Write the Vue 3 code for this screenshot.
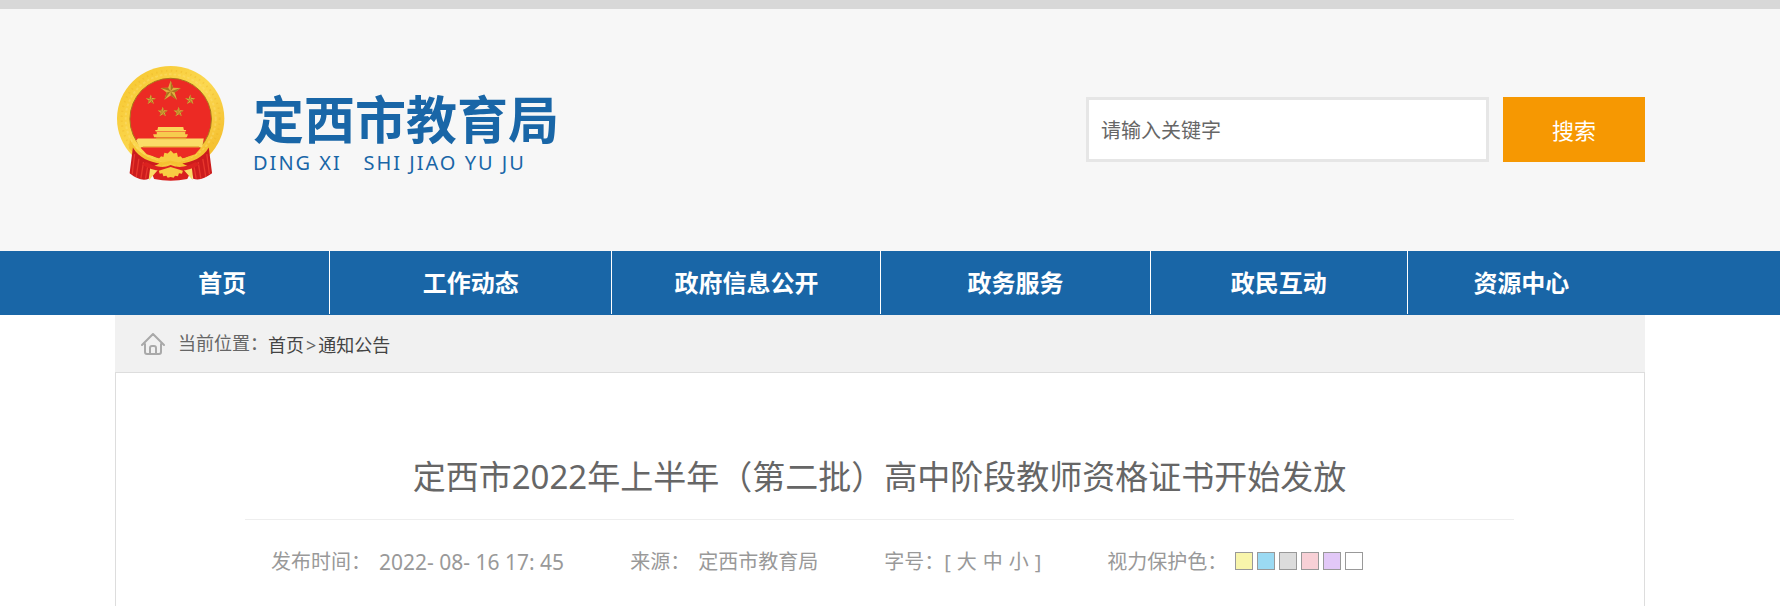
<script setup>
import { ref } from 'vue';

const keyword = ref('');

const menu = [
  { nome: '首页', size: 215 },
  { nome: '工作动态', size: 282 },
  { nome: '政府信息公开', size: 269 },
  { nome: '政务服务', size: 269 },
  { nome: '政民互动', size: 257 },
  { nome: '资源中心', size: 228 },
];

const sizes = ['大', '中', '小'];

const colors = [
  { name: '黄色', value: '#f8f5ab' },
  { name: '蓝色', value: '#9bdaf3' },
  { name: '灰色', value: '#dcdcdc' },
  { name: '粉色', value: '#f8d0d6' },
  { name: '紫色', value: '#e2c8f7' },
  { name: '白色', value: '#ffffff' },
];
const background = ref('#ffffff');

const stars = [
  { x: 212, y: 124, s: 32 },
  { x: 152, y: 150, s: 16 },
  { x: 271, y: 150, s: 16 },
  { x: 188, y: 187, s: 16 },
  { x: 236, y: 187, s: 16 },
];
</script>

<template>
  <div class="page">
    <header class="header">
      <div class="wrap header-inner">
        <a class="brand" href="#">
          <svg class="emblem" viewBox="50 46 326 348" aria-hidden="true">
            <defs>
              <linearGradient id="gold" x1="0" y1="0" x2="1" y2="1">
                <stop offset="0" stop-color="#f6c52c" />
                <stop offset="0.5" stop-color="#fbd850" />
                <stop offset="1" stop-color="#f2b624" />
              </linearGradient>
            </defs>
            <ellipse cx="212" cy="207" rx="162" ry="159" fill="url(#gold)" />
            <ellipse cx="212" cy="207" rx="148" ry="145" fill="none" stroke="#e9a91f" stroke-width="6" stroke-dasharray="4 11" opacity="0.3" />
            <ellipse cx="212" cy="207" rx="136" ry="134" fill="none" stroke="#fde27a" stroke-width="6" stroke-dasharray="8 6" opacity="0.4" />
            <circle cx="212" cy="208" r="123" fill="#ec2a24" stroke="#a8751b" stroke-width="3" />
            <g v-for="(star, i) in stars" :key="i" :transform="`translate(${star.x} ${star.y}) scale(${star.s})`">
              <path d="M0-1 .24-.32 .95-.31 .38.12 .59.81 0 .4-.59.81-.38.12-.95-.31-.24-.32Z" fill="#e0b040" />
              <path d="M0-1V0L.24-.32ZM.95-.31 0 0 .38.12ZM.59.81 0 0V.4ZM-.59.81 0 0-.38.12ZM-.95-.31 0 0-.24-.32Z" fill="#a8751f" />
            </g>
            <path d="M174 232h76l2 9h7l-2 5H167l-2-5h7Z" fill="#fbd65a" />
            <path d="M170 247h86v7h8l-3 9H162l-3-9h11Z" fill="#f6cc4e" />
            <path d="M113 267h199l-5 26H118l-10-20Z" fill="#fbdc68" />
            <path d="M168 264h90v5h-90ZM128 290h170v4H128Z" fill="#e5ac37" />
            <path d="M121 295h182l-17 19-40 13H182l-42-13Z" fill="#ec2a24" />
            <path d="M151 362 276 362 262 389Q212 400 162 389Z" fill="#d9201f" />
            <path d="M134 353 176 359 147 392Q148 369 134 353ZM291 353 249 359 278 392Q277 369 291 353Z" fill="#fbdc68" />
            <path d="M89 270Q112 318 184 338L212 333 241 338Q312 318 336 270L340 296Q304 338 246 349L212 342 178 349Q120 338 86 296Z" fill="#f5c232" />
            <path d="M98 294C116 326 150 338 178 342L150 356 146 388C132 394 113 392 88 372Z" fill="#cc1c1d" />
            <path d="M327 294C309 326 276 338 247 342L276 356 280 388C296 394 316 388 337 372Z" fill="#cc1c1d" />
            <path d="M103 314 96 374M116 328 108 383M130 338 122 388M144 344 136 388M321 314 329 374M309 328 318 383M295 338 303 388M281 344 289 388" stroke="#e8372c" stroke-width="4" fill="none" />
            <path d="M174 330l9-10 7 3 3-13 10 2 9-9 9 9 10-2 3 13 8-3 9 10-14 9-25-5-24 5Z" fill="#f8cb40" />
            <path d="M138 338Q180 362 212 347Q246 362 287 338L300 345Q257 372 212 359Q166 372 125 345Z" fill="#dc2220" />
            <path d="M176 364l36-11 37 11-3 9-9-1-3 9-9-2-4 6-9-2-9 2-4-6-9 2-3-9-8 1Z" fill="#f8cd43" />
          </svg>
          <span class="brand-text">
            <strong class="brand-name">定西市教育局</strong>
            <span class="brand-pinyin">DING XI&nbsp;&nbsp; SHI JIAO YU JU</span>
          </span>
        </a>
        <form class="search" @submit.prevent>
          <input v-model="keyword" type="text" placeholder="请输入关键字" aria-label="请输入关键字" />
          <button type="submit">搜索</button>
        </form>
      </div>
    </header>

    <nav class="nav">
      <div class="wrap">
        <ul class="menu">
          <li v-for="item in menu" :key="item.nome" :style="{ flexGrow: item.size }">
            <a href="#">{{ item.nome }}</a>
          </li>
        </ul>
      </div>
    </nav>

    <main class="wrap">
      <div class="crumbs">
        <svg class="home" viewBox="0 0 24 22" fill="none" stroke="#a9a9a9" stroke-width="2" stroke-linejoin="round" stroke-linecap="round" aria-hidden="true">
          <path d="M1 12 12 1l11 11M4 11v8q0 2 2 2h12q2 0 2-2v-8M9 20v-5q0-2 2-2h2q2 0 2 2v5" />
        </svg>
        <span class="crumbs-label">当前位置：</span>
        <span class="crumbs-path"><a href="#">首页</a><span class="arrow">&gt;</span><a href="#">通知公告</a></span>
      </div>

      <article class="article" :style="{ backgroundColor: background }">
        <h1>定西市2022年上半年（第二批）高中阶段教师资格证书开始发放</h1>
        <div class="meta">
          <div class="meta-item">
            <span>发布时间：</span>
            <time datetime="2022-08-16T17:45">2022- 08- 16 17: 45</time>
          </div>
          <div class="meta-item">
            <span>来源：</span>
            <span>定西市教育局</span>
          </div>
          <div class="font-size">
            <span>字号：[</span>
            <button v-for="size in sizes" :key="size" type="button">{{ size }}</button>
            <span>]</span>
          </div>
          <div class="meta-item">
            <span>视力保护色：</span>
            <div class="swatches">
              <button
                v-for="color in colors"
                :key="color.name"
                type="button"
                :aria-label="color.name"
                :style="{ backgroundColor: color.value }"
                @click="background = color.value"
              ></button>
            </div>
          </div>
        </div>
      </article>
    </main>
  </div>
</template>

<style>
body {
  background: #fff;
}
</style>

<style scoped>
.page {
  display: flex;
  flex-direction: column;
  min-height: 100vh;
  font-family: "Noto Sans", "Noto Sans CJK SC", sans-serif;
  color: #666;
}
.page * {
  box-sizing: border-box;
}
a {
  color: inherit;
  text-decoration: none;
}
button, input {
  font-family: inherit;
}
.wrap {
  padding: 0 135px 0 115px;
}

.header {
  border-top: 9px solid #d8d8d8;
  background: #f7f7f7;
}
.header-inner {
  display: flex;
  justify-content: space-between;
  align-items: flex-start;
  padding-top: 56px;
  padding-bottom: 70px;
}
.brand {
  display: flex;
  gap: 28px;
  padding-left: 2px;
  color: #1966a7;
}
.emblem {
  width: 108px;
  height: 116px;
}
.brand-text {
  display: flex;
  flex-direction: column;
  padding-top: 24px;
}
.brand-name {
  font-size: 51px;
  line-height: 60px;
}
.brand-pinyin {
  font-size: 20px;
  line-height: 28px;
  letter-spacing: 2px;
}
.search {
  display: flex;
  gap: 14px;
  padding-top: 32px;
}
.search input {
  width: 403px;
  height: 65px;
  padding: 2px 12px 0;
  border: 3px solid #e6e6e6;
  background: #fff;
  font-size: 20px;
  color: #666;
}
.search input::placeholder {
  color: #666;
  opacity: 1;
}
.search button {
  width: 142px;
  padding: 0 0 2px;
  border: 0;
  background: #f69802;
  color: #fff;
  font-size: 22px;
}

.nav {
  background: #1966a7;
}
.menu {
  display: flex;
  margin: 0;
  padding: 0 10px 1px 0;
  list-style: none;
}
.menu li {
  flex-basis: 0;
  border-right: 1px solid #fff;
}
.menu li:last-child {
  border-right: 0;
}
.menu a {
  display: block;
  color: #fff;
  font-size: 24px;
  font-weight: bold;
  line-height: 63px;
  text-align: center;
}

main {
  display: flex;
  flex: 1;
  flex-direction: column;
}
.crumbs {
  display: flex;
  align-items: center;
  height: 57px;
  padding-left: 26px;
  background: #f1f1f1;
  font-size: 18px;
}
.home {
  width: 24px;
  height: 22px;
  margin-right: 13px;
}
.crumbs-label {
  padding-bottom: 4px;
}
.crumbs-path {
  color: #444;
}
.arrow {
  padding: 0 2px;
  color: #666;
}

.article {
  flex: 1;
  padding: 74px 130px 0 129px;
  border: 1px solid #ddd;
  border-bottom: 0;
}
h1 {
  margin: 0;
  padding-bottom: 12px;
  border-bottom: 1px solid #eee;
  font-size: 33px;
  font-weight: normal;
  line-height: 60px;
  text-align: center;
}
.meta {
  display: flex;
  align-items: center;
  gap: 66px;
  padding: 26px 26px 0;
  color: #999;
  font-size: 20px;
  line-height: 32px;
  white-space: nowrap;
}
.meta-item {
  display: flex;
  gap: 8px;
}
.meta time {
  font-size: 21px;
}
.font-size {
  display: flex;
  gap: 6px;
}
.font-size button {
  padding: 0;
  border: 0;
  background: none;
  color: inherit;
  font-size: 20px;
  line-height: 32px;
}
.swatches {
  display: flex;
  gap: 4px;
  padding-top: 6px;
}
.swatches button {
  width: 18px;
  height: 18px;
  padding: 0;
  border: 1px solid #999;
}
</style>
